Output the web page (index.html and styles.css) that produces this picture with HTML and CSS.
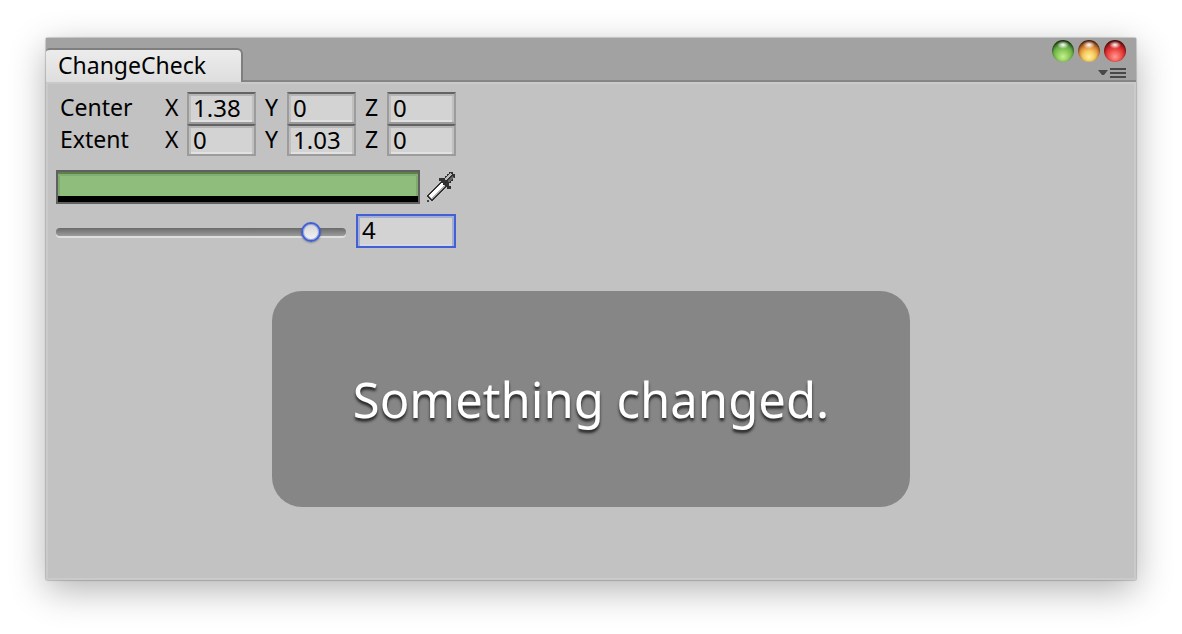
FILE: index.html
```html
<!DOCTYPE html>
<html lang="en">
<head>
<meta charset="utf-8">
<meta name="viewport" content="width=device-width, initial-scale=1">
<title>ChangeCheck</title>
<link rel="stylesheet" href="styles.css">
</head>
<body>
<main class="window">
  <header class="titlebar">
    <button class="tab" type="button">ChangeCheck</button>
    <div class="window-tools">
      <div class="lights">
        <button class="light light-green" type="button" aria-label="Minimize"></button>
        <button class="light light-amber" type="button" aria-label="Zoom"></button>
        <button class="light light-red" type="button" aria-label="Close"></button>
      </div>
      <button class="menu" type="button" aria-label="Window menu">
        <svg width="28" height="12" viewBox="0 0 28 12" aria-hidden="true">
          <path d="M0 2h10L6 7H4z" fill="#484848"/>
          <path d="M12 0h16v2H12zM12 4h16v2H12zM12 8h16v2H12z" fill="#484848"/>
        </svg>
      </button>
    </div>
  </header>
  <section class="content">
    <form class="inspector">
      <div class="vector" role="group" aria-labelledby="center">
        <span class="vector-name" id="center">Center</span>
        <label class="axis">X<input class="field" type="text" inputmode="decimal" value="1.38"></label>
        <label class="axis">Y<input class="field" type="text" inputmode="decimal" value="0"></label>
        <label class="axis">Z<input class="field" type="text" inputmode="decimal" value="0"></label>
      </div>
      <div class="vector" role="group" aria-labelledby="extent">
        <span class="vector-name" id="extent">Extent</span>
        <label class="axis">X<input class="field" type="text" inputmode="decimal" value="0"></label>
        <label class="axis">Y<input class="field" type="text" inputmode="decimal" value="1.03"></label>
        <label class="axis">Z<input class="field" type="text" inputmode="decimal" value="0"></label>
      </div>
      <div class="color-row">
        <div class="color-box"><input class="swatch" type="color" value="#8fbe7c" aria-label="Color"></div>
        <button class="picker" type="button" aria-label="Pick color">
          <svg width="30" height="32" viewBox="0 0 30 32" shape-rendering="crispEdges" aria-hidden="true">
            <path d="M4 28L6 23L17 12" fill="none" stroke="#777" stroke-width="2"/>
            <path d="M1 29h2v2H1z" fill="#444"/>
            <path d="M3 28L20 11" stroke="#333" stroke-width="8"/>
            <path d="M4 27L20 11" stroke="#b0b0b0" stroke-width="5"/>
            <path d="M4 26L19 11" stroke="#fff" stroke-width="3"/>
            <path d="M13 7h4v2h2v2h2v2h2v2h2v3h-4v-2h-2v-2h-2v-2h-2v-2h-2z" fill="#303030"/>
            <path d="M17 9V7h2V5h2V3h2V1h4v2h2v4h-2v3h-2v2h-2v2h-3v-3h-3z" fill="#303030"/>
            <path d="M19 9l6-6" stroke="#bbb" stroke-width="2"/>
            <path d="M22 11l5-5" stroke="#666" stroke-width="2"/>
          </svg>
        </button>
      </div>
      <div class="slider-row">
        <input class="slider" type="range" min="0" max="4.4" step="0.1" value="4" aria-label="Value">
        <input class="field field-active" type="text" inputmode="decimal" value="4" aria-label="Slider value">
      </div>
    </form>
    <div class="toast" role="status">Something changed.</div>
  </section>
</main>
</body>
</html>
```
FILE: styles.css
```css
* { box-sizing: border-box; }

body {
  margin: 0;
  min-height: 100vh;
  padding: 38px 46px 54px;
  display: flex;
  background: #fff;
  color: #000;
  font: 23px/28px "Noto Sans", "Open Sans", sans-serif;
}

button, input { font: inherit; color: inherit; margin: 0; }
button { padding: 0; border: 0; background: none; }

.window {
  flex: 1;
  display: flex;
  flex-direction: column;
  background: #c2c2c2;
  border-radius: 2px;
  box-shadow: 0 0 1px 1px rgba(0, 0, 0, .18), 0 10px 36px rgba(0, 0, 0, .3);
}

.titlebar {
  display: flex;
  justify-content: space-between;
  align-items: flex-end;
  height: 44px;
  background: #a2a2a2;
  border-bottom: 2px solid #858585;
}

.tab {
  height: 34px;
  margin-bottom: -2px;
  padding: 0 35px 2px 12px;
  border: solid #7f7f7f;
  border-width: 2px 2px 0 0;
  border-radius: 4px 6px 0 0;
  background: linear-gradient(#ececec, #dedede);
  line-height: 30px;
}

.window-tools {
  display: flex;
  flex-direction: column;
  align-items: flex-end;
  align-self: flex-start;
  gap: 6px;
  padding: 2px 10px 0 0;
}

.lights { display: flex; gap: 4px; }

.light {
  width: 22px;
  height: 22px;
  border-radius: 50%;
  box-shadow: inset 0 1px 3px rgba(0, 0, 0, .6);
}

.light-green {
  background:
    radial-gradient(ellipse 6px 4px at 50% 22%, #fff, transparent),
    radial-gradient(circle at 50% 76%, #c5ef90 0, #8fce5c 30%, #6db04a 52%, #1d4716 84%);
}

.light-amber {
  background:
    radial-gradient(ellipse 6px 4px at 50% 22%, #fff, transparent),
    radial-gradient(circle at 50% 76%, #fff29a 0, #f6c95f 30%, #dc8a3b 52%, #6a2a0d 84%);
}

.light-red {
  background:
    radial-gradient(ellipse 6px 4px at 50% 22%, #fff, transparent),
    radial-gradient(circle at 50% 76%, #ff9a94 0, #f25550 30%, #d92a2a 52%, #640d0d 84%);
}

.menu { display: flex; }

.content {
  flex: 1;
  padding: 8px 8px 40px;
  border: 2px solid #cacaca;
}

.inspector { width: 400px; max-width: 100%; }

.vector { display: flex; height: 32px; }

.vector-name { flex: 1; padding-left: 4px; line-height: 30px; }

.axis {
  display: flex;
  justify-content: space-between;
  width: 91px;
  margin-left: 9px;
  line-height: 30px;
}

.field {
  width: 69px;
  height: 32px;
  padding: 0 4px 2px;
  border: 2px solid #9c9c9c;
  border-top-color: #636363;
  border-radius: 0;
  outline: 0;
  background: #d3d3d3;
  box-shadow: inset 0 2px #b5b5b5, inset 2px 0 #c0c0c0, inset -2px 0 #c0c0c0, inset 0 -2px #e1e1e1;
  font-size: 24px;
}

.color-row {
  display: flex;
  gap: 6px;
  margin-top: 14px;
}

.color-box {
  flex: 1;
  height: 34px;
  padding-bottom: 6px;
  border: 2px solid #606060;
  background: #000;
}

.swatch {
  display: block;
  width: 100%;
  height: 24px;
  padding: 0;
  border: 0;
  border-radius: 0;
  appearance: none;
  background: none;
}

.swatch::-webkit-color-swatch-wrapper { padding: 0; }

.swatch::-webkit-color-swatch {
  border: 0;
  border-radius: 0;
  box-shadow: inset 0 2px #5b8249, inset 0 4px #83ae71, inset 2px 0 #7faa6d, inset -2px 0 #7faa6d;
}

.picker { display: flex; align-items: center; width: 30px; }

.slider-row {
  display: flex;
  align-items: center;
  gap: 10px;
  margin-top: 10px;
}

.slider {
  flex: 1;
  min-width: 0;
  height: 22px;
  padding-top: 2px;
  appearance: none;
  background: none;
}

.slider::-webkit-slider-runnable-track {
  height: 8px;
  border-radius: 4px;
  background: linear-gradient(#6a6a6a, #9c9c9c);
  box-shadow: 0 2px #dedede;
}

.slider::-webkit-slider-thumb {
  appearance: none;
  width: 20px;
  height: 20px;
  margin-top: -6px;
  border: 2px solid #405fd5;
  border-radius: 50%;
  background: linear-gradient(#d4d4d4, #f4f4f4);
  box-shadow: inset 0 0 0 1px #99a5df, 0 1px 2px rgba(0, 0, 0, .3);
}

.field-active {
  width: 100px;
  height: 34px;
  padding-bottom: 4px;
  border-color: #4260d3;
  box-shadow: inset 0 2px #a5add0, inset 2px 0 #a5add0, inset -2px 0 #a5add0, inset 0 -2px #d5d8e4;
}

.toast {
  width: 638px;
  max-width: 100%;
  margin: 43px auto 0;
  padding: 76px 16px;
  border-radius: 30px;
  background: #868686;
  color: #fff;
  font-size: 49px;
  line-height: 64px;
  text-align: center;
  text-shadow: 0 3px 3px rgba(0, 0, 0, .75);
}
```
